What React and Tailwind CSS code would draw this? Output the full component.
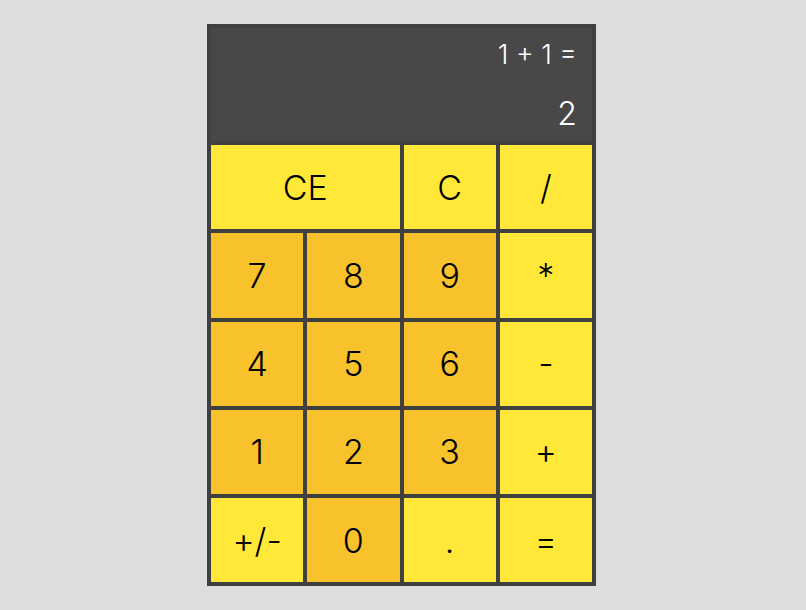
import React, { useState } from 'react';

const keys = [
  { label: 'CE', span: true, tone: 'light' },
  { label: 'C', tone: 'light' },
  { label: '/', tone: 'light' },
  { label: '7', tone: 'dark' },
  { label: '8', tone: 'dark' },
  { label: '9', tone: 'dark' },
  { label: '*', tone: 'light' },
  { label: '4', tone: 'dark' },
  { label: '5', tone: 'dark' },
  { label: '6', tone: 'dark' },
  { label: '-', tone: 'light' },
  { label: '1', tone: 'dark' },
  { label: '2', tone: 'dark' },
  { label: '3', tone: 'dark' },
  { label: '+', tone: 'light' },
  { label: '+/-', tone: 'light' },
  { label: '0', tone: 'dark' },
  { label: '.', tone: 'light' },
  { label: '=', tone: 'light' },
];

const App = () => {
  const [expr] = useState('1 + 1 =');
  const [result] = useState('2');

  return (
    <div
      className="flex min-h-[610px] w-full justify-center bg-[#dddddd] pr-[3px] pt-6"
      style={{ fontFamily: 'Inter, "Open Sans", sans-serif' }}
    >
      <div className="h-fit w-[389px] border-4 border-[#404040] bg-[#404040]">
        <div className="flex h-[113px] flex-col items-end bg-[#494748] pr-[15px] pt-[13px] font-light text-white">
          <div className="text-[27px] leading-none">{expr}</div>
          <div className="mt-[30px] text-[32px] leading-none">{result}</div>
        </div>

        <div className="mt-1 grid grid-cols-4 gap-1">
          {keys.map((k, i) => (
            <button
              key={i}
              className={`flex h-[84.25px] items-center justify-center text-[34px] font-light text-black ${
                k.span ? 'col-span-2' : ''
              } ${k.tone === 'dark' ? 'bg-[#f8c22c]' : 'bg-[#ffe837]'}`}
            >
              {k.label}
            </button>
          ))}
        </div>
      </div>
    </div>
  );
};

export default App;
